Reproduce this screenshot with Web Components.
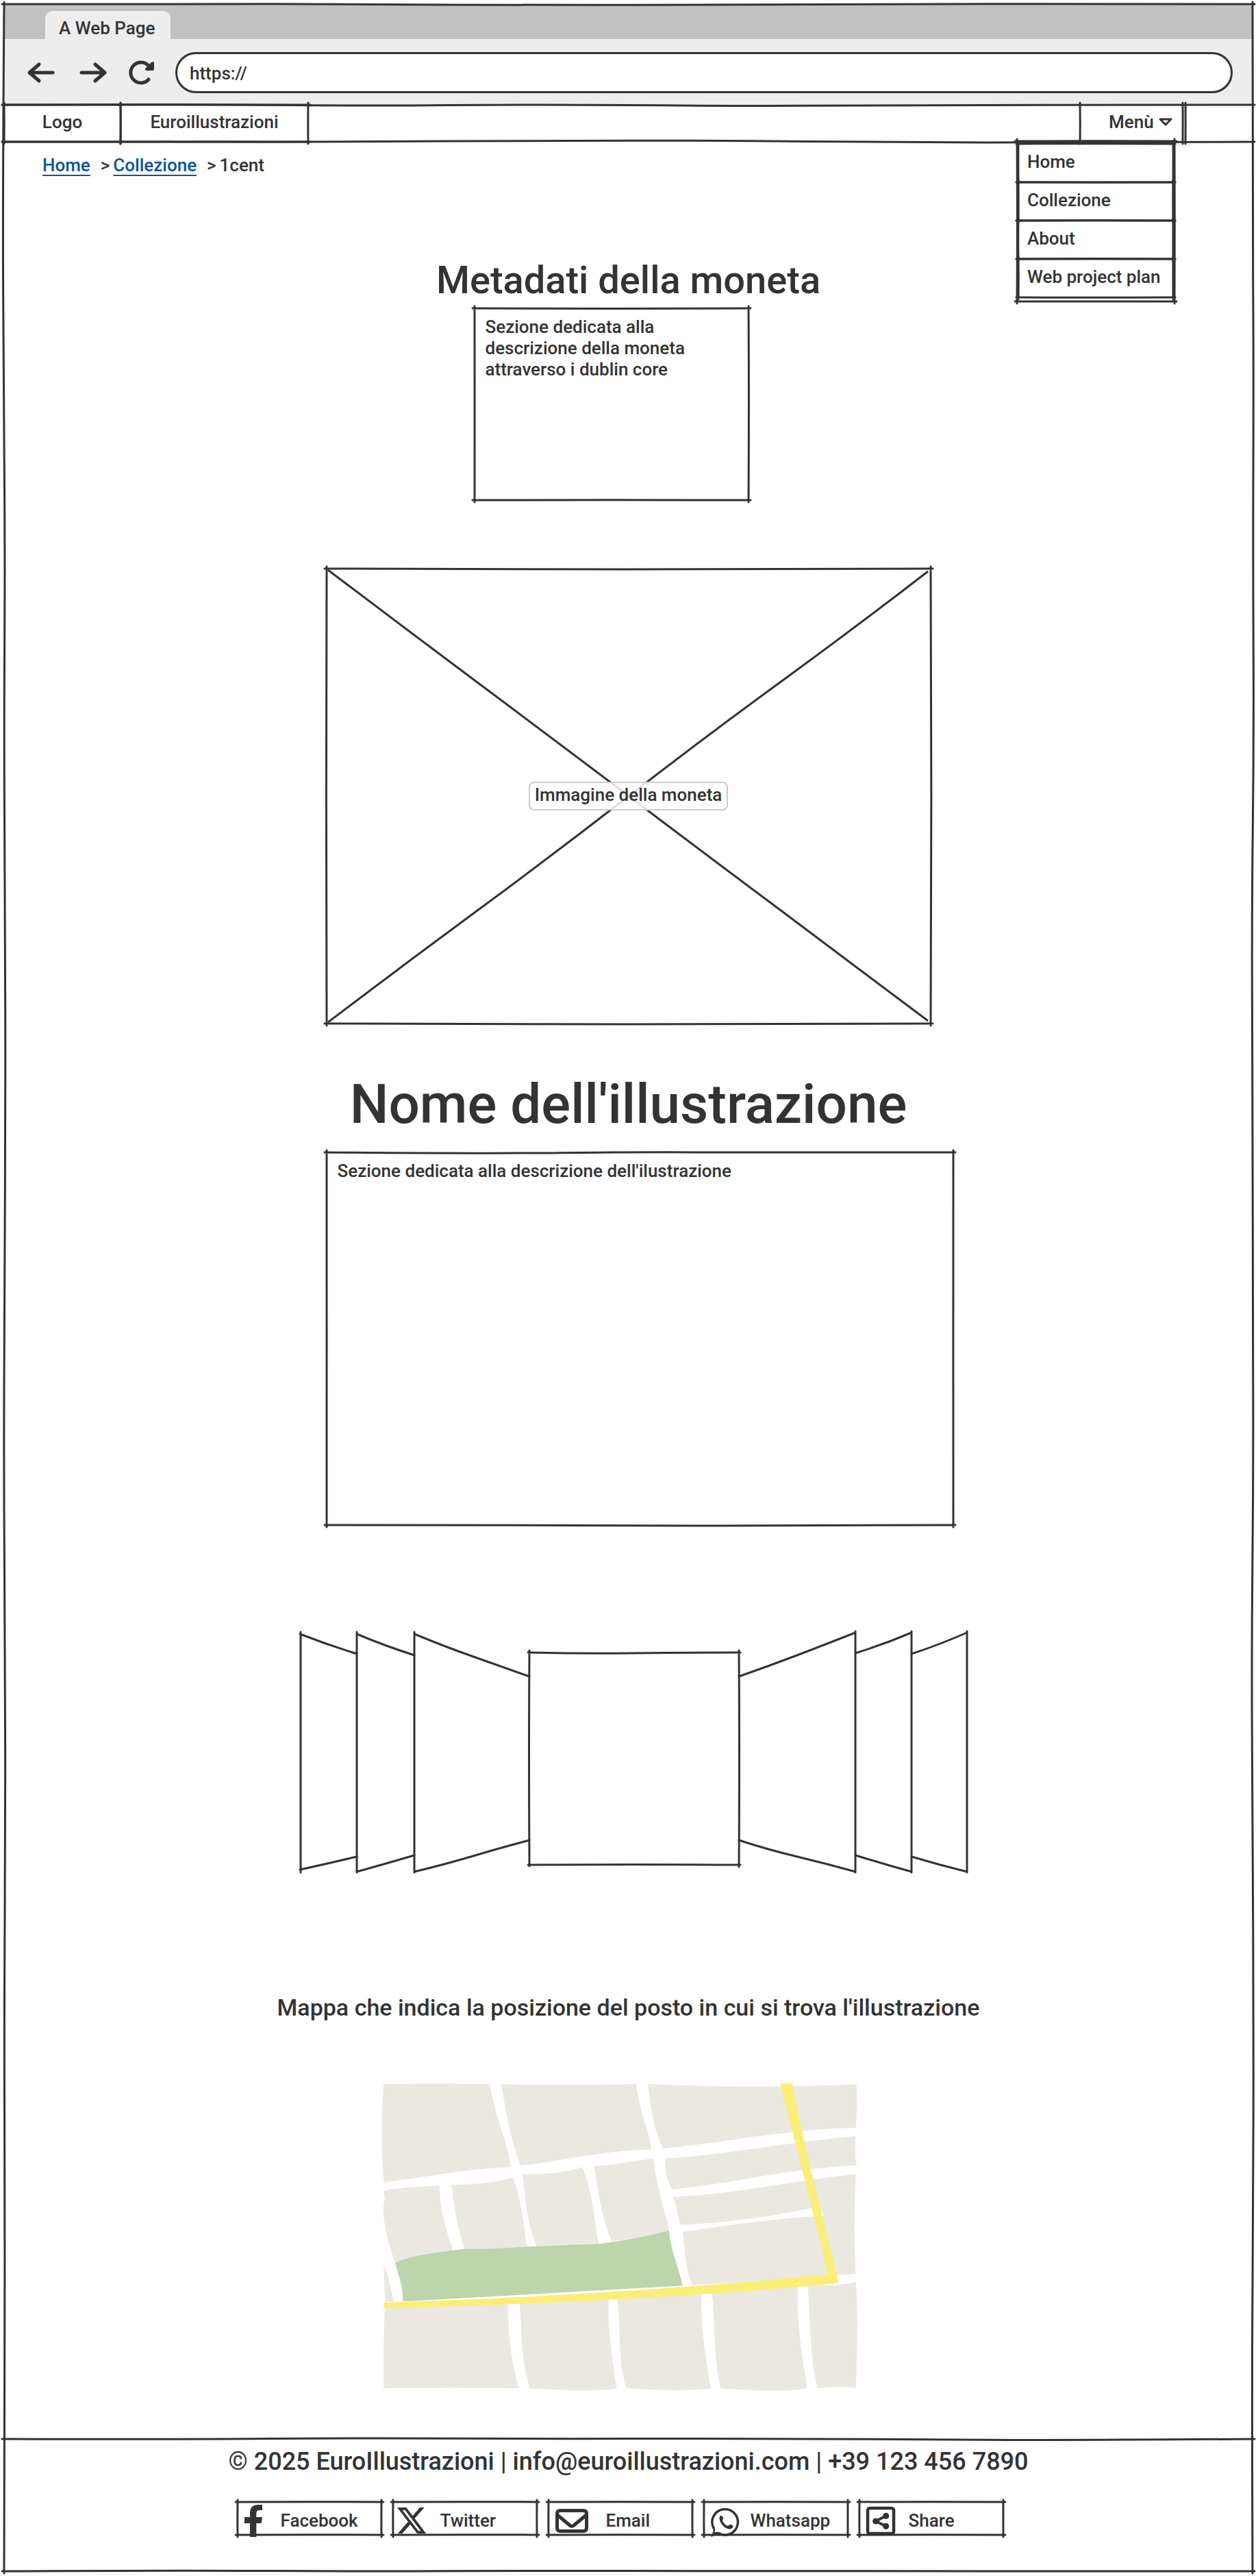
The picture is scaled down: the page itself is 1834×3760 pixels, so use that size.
<!DOCTYPE html>
<html lang="it">
<head>
<meta charset="utf-8">
<meta name="viewport" content="width=device-width, initial-scale=1">
<title>Euroillustrazioni – 1cent</title>
<style>
  :root { --ink: #333333; --link: #0b5599; }
  body { margin: 0; padding: 6px 5px 7px 6px; background: #ffffff; color: var(--ink);
         font: 500 26px/31px Roboto, "Liberation Sans", sans-serif; }
</style>
</head>
<body>
<wire-page></wire-page>

<script>
const define = (name, html, Base = HTMLElement) => {
  const template = document.createElement('template');
  template.innerHTML = html;
  customElements.define(name, class extends Base {
    constructor() {
      super();
      this.attachShadow({ mode: 'open' }).append(template.content.cloneNode(true));
    }
  });
};

/* A box whose edges look drawn by hand. sides: which edges to draw. seed: which wobble. */
class SketchFrame extends HTMLElement {
  connectedCallback() {
    if (!this.shadowRoot) {
      this.attachShadow({ mode: 'open' }).innerHTML = `
        <style>
          :host { display: block; position: relative; box-sizing: border-box; }
          svg { position: absolute; inset: 0; width: 100%; height: 100%; overflow: visible;
                pointer-events: none; fill: none; stroke: var(--ink); stroke-width: 3; stroke-linecap: round; }
        </style>
        <slot></slot><svg aria-hidden="true"><path/></svg>`;
    }
    this.draw();
    new ResizeObserver(() => this.draw()).observe(this);
  }
  draw() {
    const w = this.offsetWidth, h = this.offsetHeight;
    let s = Number(this.getAttribute('seed') || 1) * 7919;
    const rnd = () => { s = (s * 16807 + 11) % 2147483647; return s / 2147483647 - 0.5; };
    const line = (x1, y1, x2, y2) => {
      const len = Math.hypot(x2 - x1, y2 - y1), n = Math.max(2, Math.round(len / 260));
      const amp = Math.min(4, 1 + len / 300), ux = (x2 - x1) / len, uy = (y2 - y1) / len;
      const pts = [];
      for (let i = 0; i <= n; i++) {
        const t = i === 0 ? -3 : i === n ? len + 3 : len * i / n;
        const o = i === 0 || i === n ? 0 : rnd() * amp;
        pts.push([x1 + ux * t - uy * o, y1 + uy * t + ux * o]);
      }
      let d = `M${pts[0]}`;
      for (let i = 1; i < n; i++) {
        const end = i === n - 1 ? pts[n] : [(pts[i][0] + pts[i + 1][0]) / 2, (pts[i][1] + pts[i + 1][1]) / 2];
        d += `Q${pts[i]} ${end}`;
      }
      return d;
    };
    const sides = (this.getAttribute('sides') || 'top right bottom left').split(' ');
    const all = { top: [0, 0, w, 0], right: [w, 0, w, h], bottom: [0, h, w, h], left: [0, 0, 0, h] };
    this.shadowRoot.querySelector('path').setAttribute('d', sides.map(k => line(...all[k])).join(''));
  }
}

define('browser-bar', `
<style>
  :host { display: block; background: #ededed; }
  .strip { display: flex; align-items: flex-end; height: 51px; padding-left: 60px; background: #c1c1c1; }
  .tab { box-sizing: border-box; height: 41px; min-width: 183px; padding: 9px 20px 0; line-height: 32px;
         background: #ededed; border-radius: 10px 10px 0 0; }
  .tools { display: flex; align-items: center; gap: 28px; height: 96px; padding: 2px 29px 0 34px; box-sizing: border-box; }
  .keys { display: flex; gap: 34px; }
  button { display: block; width: 40px; height: 40px; padding: 0; border: 0; background: none; }
  svg { display: block; width: 40px; height: 40px; overflow: visible; fill: none; stroke: var(--ink);
        stroke-width: 5; stroke-linecap: round; stroke-linejoin: round; }
  input { flex: 1; min-width: 0; box-sizing: border-box; height: 60px; padding: 2px 18px 0; border: 3px solid var(--ink);
          border-radius: 30px; background: #fff; color: inherit; font: inherit; outline: 0; }
</style>
<div class="strip"><div class="tab">A Web Page</div></div>
<div class="tools">
  <div class="keys">
    <button aria-label="Indietro"><svg viewBox="40 86 40 40"><path d="M77 106H43M57 94L43 106L57 118"/></svg></button>
    <button aria-label="Avanti"><svg viewBox="114 86 40 40"><path d="M119 106H153M139 94L153 106L139 118"/></svg></button>
    <button aria-label="Ricarica"><svg viewBox="188 86 40 40"><path d="M217 116A15 15 0 1 1 217 96"/><path d="M223 92V101H214Z" fill="#333" stroke-width="4"/></svg></button>
  </div>
  <input type="text" value="https://" aria-label="Indirizzo">
</div>`);

define('drop-menu', `
<style>
  :host { display: block; width: 230px; background: #fff; }
  nav { display: flex; flex-direction: column; padding: 4px 2px 6px; }
  a { display: block; box-sizing: border-box; height: 56px; padding: 10px 13px; line-height: 32px; color: inherit; text-decoration: none;
      white-space: nowrap; }
</style>
<sketch-frame seed="5"><nav aria-label="Menù">
  <sketch-frame seed="2"><a href="#home">Home</a></sketch-frame>
  <sketch-frame seed="9"><a href="#collezione">Collezione</a></sketch-frame>
  <sketch-frame seed="4"><a href="#about">About</a></sketch-frame>
  <sketch-frame seed="7"><a href="#plan">Web project plan</a></sketch-frame>
</nav></sketch-frame>`);

define('site-nav', `
<style>
  :host { display: block; position: relative; z-index: 1; }
  .bar { display: flex; height: 54px; }
  .cell { display: flex; align-items: center; justify-content: center; box-sizing: border-box; height: 54px; padding-bottom: 4px; }
  .logo { width: 170px; } .brand { width: 274px; }
  .fill { flex: 1; }
  .menu { position: relative; width: 150px; margin-right: 4px; }
  .end { width: 98px; }
  button { display: flex; align-items: center; gap: 7px; height: 50px; padding: 0 18px 0 42px; border: 0; background: none;
           color: inherit; font: inherit; }
  a { color: inherit; text-decoration: none; }
  svg { width: 20px; height: 12px; overflow: visible; fill: none; stroke: var(--ink); stroke-width: 3; stroke-linejoin: round; }
  drop-menu { position: absolute; top: 53px; right: 12px; }
</style>
<sketch-frame seed="3" sides="top bottom"><div class="bar">
  <sketch-frame class="logo" seed="8"><a class="cell" href="#home">Logo</a></sketch-frame>
  <sketch-frame class="brand" seed="6"><a class="cell" href="#home">Euroillustrazioni</a></sketch-frame>
  <div class="fill"></div>
  <sketch-frame class="menu" seed="2" sides="left right"><button aria-expanded="true">Menù
    <svg viewBox="0 0 20 12" aria-hidden="true"><path d="M2 2H18L10 10Z"/></svg></button>
    <drop-menu></drop-menu></sketch-frame>
  <sketch-frame class="end" seed="4" sides="left"></sketch-frame>
</div></sketch-frame>`);

define('bread-crumb', `
<style>
  :host { display: block; }
  ol { display: flex; margin: 0; padding: 0; list-style: none; line-height: 32px; }
  .sep { padding: 0 5px 0 15px; }
  a { color: var(--link); text-decoration: underline; text-decoration-thickness: 2px; text-underline-offset: 5px; text-decoration-skip-ink: none; }
</style>
<nav aria-label="Percorso"><ol>
  <li><a href="#home">Home</a></li><li class="sep">&gt;</li>
  <li><a href="#collezione">Collezione</a></li><li class="sep">&gt;</li>
  <li aria-current="page">1cent</li>
</ol></nav>`);

define('image-placeholder', `
<style>
  :host { display: block; }
  .pic { position: relative; display: grid; place-items: center; height: 664px; }
  svg { grid-area: 1 / 1; width: 100%; height: 100%; stroke: var(--ink); stroke-width: 3; fill: none; }
  svg path { vector-effect: non-scaling-stroke; }
  .tag { grid-area: 1 / 1; box-sizing: border-box; height: 42px; padding: 1px 7px; border: 2px solid #cccccc;
         border-radius: 8px; background: rgba(255, 255, 255, .85); line-height: 32px; }
</style>
<sketch-frame seed="12"><div class="pic">
  <svg viewBox="0 0 882 664" preserveAspectRatio="none" aria-hidden="true"><path d="M2 2Q110 84 220 166T441 332T662 498T878 660M2 662Q110 580 220 499T441 332T662 166T878 4"/></svg>
  <div class="tag"><slot></slot></div>
</div></sketch-frame>`);

define('cover-flow', `
<style>
  :host { display: block; width: 982px; max-width: 100%; }
  svg { display: block; width: 100%; overflow: visible; fill: none; stroke: var(--ink); stroke-width: 3; stroke-linecap: round; }
</style>
<svg viewBox="433 2380 982 356" role="img" aria-label="Galleria">
  <path d="M438 2382V2733M437 2385Q478 2401 520 2414M437 2729Q478 2720 520 2710"/>
  <path d="M520 2382V2733M520 2385Q560 2402 604 2416M520 2732Q560 2721 604 2708"/>
  <path d="M604 2382V2733M604 2385Q650 2404 690 2418T772 2447M604 2732Q650 2721 690 2709T772 2686"/>
  <path d="M1411 2381V2733M1411 2383Q1370 2401 1330 2414M1411 2732Q1370 2722 1330 2710"/>
  <path d="M1330 2381V2733M1330 2383Q1290 2400 1248 2413M1330 2732Q1290 2721 1248 2708"/>
  <path d="M1248 2381V2733M1248 2383Q1205 2400 1163 2416T1078 2447M1248 2732Q1205 2720 1163 2710T1078 2686"/>
  <path d="M772 2409Q771 2560 772 2724M1078 2409Q1079 2560 1078 2725M770 2412Q850 2414 925 2413T1080 2412M770 2722Q925 2721 1080 2722"/>
</svg>`);

define('street-map', `
<style>
  :host { display: block; width: 697px; max-width: 100%; }
  svg { display: block; width: 100%; height: 450px; fill: #ebe8e1; }
</style>
<svg viewBox="56 60 1458 1350" preserveAspectRatio="none" role="img" aria-label="Mappa">
  <path d="M63 66Q200 62 387 66C400 190 440 320 452 430C320 435 210 470 63 497Q50 280 63 66Z"/>
  <path d="M422 66Q560 74 834 66C845 200 880 290 880 353C740 355 620 400 481 423C445 290 435 170 422 66Z"/>
  <path d="M870 66C1080 80 1320 82 1505 66Q1512 90 1505 257C1290 265 1110 320 916 349C885 260 878 160 870 66Z"/>
  <path d="M63 534C120 515 180 516 233 511C234 610 255 710 274 795C215 805 140 820 98 849C60 690 58 620 66 570Z"/>
  <path d="M270 506C340 508 410 496 458 474C485 580 490 690 501 778Q400 788 310 787C285 690 278 590 270 506Z"/>
  <path d="M487 461C560 463 630 450 669 430C698 520 705 650 719 763Q620 766 530 776C500 670 495 560 487 461Z"/>
  <path d="M705 424C760 426 830 398 887 393C895 510 920 610 935 707Q860 735 760 755C725 640 718 530 705 424Z"/>
  <path d="M922 392C1110 375 1300 320 1505 294Q1500 360 1507 422C1300 435 1130 500 945 528C922 470 924 440 922 392Z"/>
  <path d="M946 559C1130 550 1310 490 1505 460Q1496 690 1505 898L1420 905C1280 920 1150 935 1006 946C985 890 985 800 976 714C1120 680 1270 655 1406 642L1394 602C1250 645 1110 675 968 682C958 630 962 610 946 559Z"/>
  <path d="M63 862C80 900 84 970 94 1020H67Z"/>
  <path d="M66 1040L443 1020C440 1150 455 1290 475 1398Q270 1394 63 1398Q62 1200 66 1040Z"/>
  <path d="M477 1018L750 1002C746 1140 762 1280 775 1399Q710 1416 509 1398C480 1270 486 1140 477 1018Z"/>
  <path d="M777 1000L1033 982C1030 1130 1048 1280 1062 1397Q1000 1416 803 1397C778 1270 786 1130 777 1000Z"/>
  <path d="M1065 980L1328 952C1323 1110 1342 1270 1357 1398Q1290 1418 1092 1399C1070 1270 1076 1110 1065 980Z"/>
  <path d="M1358 949C1420 945 1480 948 1505 930Q1514 1090 1505 1398Q1460 1386 1387 1398C1365 1260 1366 1090 1358 949Z"/>
  <path fill="#bcd5ad" d="M98 849C160 808 240 804 310 787Q360 790 501 778Q600 770 732 764Q840 742 934 707C940 800 968 880 975 949L121 1018C124 950 106 900 98 849Z"/>
  <path fill="#faee78" d="M63 1023C550 1000 1000 960 1420 898C1378 640 1315 300 1274 64H1311C1345 340 1405 640 1452 938C1000 1000 520 1030 63 1048Z"/>
</svg>`);

define('share-button', `
<style>
  :host { display: block; width: 210px; --gap: 20px; }
  button { display: flex; align-items: center; gap: var(--gap); width: 100%; height: 48px; padding: 0 0 0 10px; border: 0;
           background: none; color: inherit; font: inherit; text-align: left; }
  .label { padding-top: 6px; }
</style>
<sketch-frame><button><slot name="icon"></slot><span class="label"><slot></slot></span></button></sketch-frame>`);

define('site-footer', `
<style>
  :host { display: block; }
  .inner { display: flex; flex-direction: column; align-items: center; padding: 11px 0 53px; }
  p { margin: 0 0 37px; font-size: 36px; line-height: 44px; }
  .share { display: flex; gap: 17px; margin-right: 24px; }
  svg { display: block; height: 48px; overflow: visible; fill: var(--ink); flex: none; }
  .line { fill: none; stroke: var(--ink); stroke-linejoin: round; stroke-linecap: round; }
  .wide { --gap: 26px; } .mid { --gap: 22px; } .near { --gap: 16px; }
</style>
<sketch-frame seed="11" sides="top"><div class="inner">
  <p>© 2025 EuroIllustrazioni | info@euroillustrazioni.com | +39 123 456 7890</p>
  <div class="share">
    <share-button class="wide"><svg slot="icon" width="27" viewBox="0 0 27 48"><path d="M8 51V31H0V22H8V16C8 8 12 4 20 4H26V12H22C18.5 12 17.3 14 17.3 17V22H26L24.5 31H17.3V51Z"/></svg>Facebook</share-button>
    <share-button class="mid"><svg slot="icon" width="37" viewBox="0 0 37 48"><path transform="translate(-6.4 3.6) scale(1.95)" d="M18.244 2.25h3.308l-7.227 8.26 8.502 11.24H16.17l-5.214-6.817L4.99 21.75H1.68l7.73-8.835L1.254 2.25H8.08l4.713 6.231zm-1.161 17.52h1.833L7.084 4.126H5.117z"/></svg>Twitter</share-button>
    <share-button class="wide"><svg slot="icon" width="48" viewBox="0 0 48 48"><path class="line" stroke-width="5" d="M7 12.500H41Q45.500 12.500 45.500 17V38Q45.500 42.500 41 42.500H7Q2.500 42.500 2.500 38V17Q2.500 12.500 7 12.500ZM3 19L21 34Q24 36.500 27 34L45 19"/></svg>Email</share-button>
    <share-button class="near"><svg slot="icon" width="42" viewBox="0 0 42 48"><path class="line" stroke-width="3.500" d="M4 38A18.800 18.800 0 1 1 12 46"/><path d="M2.500 37C5 42 2 46 0 51L10 47.500L15 48.500L14 44.500L9 43.500L5.500 44.500Q7 40 5.500 36Z"/><path d="M12.500 24C12 19 17 19 18 23C18 26 16 27 18 29.500C20 32 22 34 24.500 35C27 33 29 32 32 34.500C34 36 30 40 26.500 39.500C19 38 13 31 12.500 24Z"/></svg>Whatsapp</share-button>
    <share-button><svg slot="icon" width="42" viewBox="0 0 42 48"><rect class="line" stroke-width="4.500" x="2" y="9" width="38" height="37" rx="3"/><path class="line" stroke-width="4" d="M28.700 20.300L13.700 28L28.700 35.300"/><circle cx="13.700" cy="28" r="4.600"/><circle cx="28.700" cy="20.300" r="4.600"/><circle cx="28.700" cy="35.300" r="4.600"/></svg>Share</share-button>
  </div>
</div></sketch-frame>`);

define('wire-page', `
<style>
  :host { display: block; }
  main { display: flex; flex-direction: column; align-items: center; padding-top: 18px; }
  bread-crumb { align-self: flex-start; margin-left: 56px; }
  h1, h2, p { margin: 0; font-weight: 500; }
  h1 { margin-top: 118px; font-size: 56px; line-height: 68px; }
  h2 { margin-top: 70px; font-size: 80px; line-height: 96px; align-self: center; }
  .meta { width: 400px; height: 280px; margin: 7px 50px 100px 0; padding: 12px 80px 0 16px; }
  .work { display: flex; flex-direction: column; width: 915px; max-width: 100%; margin-left: 33px; }
  image-placeholder { width: 882px; max-width: 100%; }
  .work h2 { margin-right: 33px; }
  .about { height: 544px; margin-top: 22px; padding: 12px 16px; }
  cover-flow { margin: 154px 0 174px 14px; }
  .where { font-size: 34px; line-height: 40px; }
  street-map { margin: 90px 24px 70px 0; }
</style>
<sketch-frame seed="21">
  <browser-bar></browser-bar>
  <site-nav></site-nav>
  <main>
    <bread-crumb></bread-crumb>
    <h1>Metadati della moneta</h1>
    <sketch-frame class="meta" seed="14"><p>Sezione dedicata alla descrizione della moneta attraverso i dublin core</p></sketch-frame>
    <div class="work">
      <image-placeholder>Immagine della moneta</image-placeholder>
      <h2>Nome dell'illustrazione</h2>
      <sketch-frame class="about" seed="16"><p>Sezione dedicata alla descrizione dell'ilustrazione</p></sketch-frame>
    </div>
    <cover-flow></cover-flow>
    <p class="where">Mappa che indica la posizione del posto in cui si trova l'illustrazione</p>
    <street-map></street-map>
  </main>
  <site-footer></site-footer>
</sketch-frame>`);

customElements.define('sketch-frame', SketchFrame);
</script>
</body>
</html>
